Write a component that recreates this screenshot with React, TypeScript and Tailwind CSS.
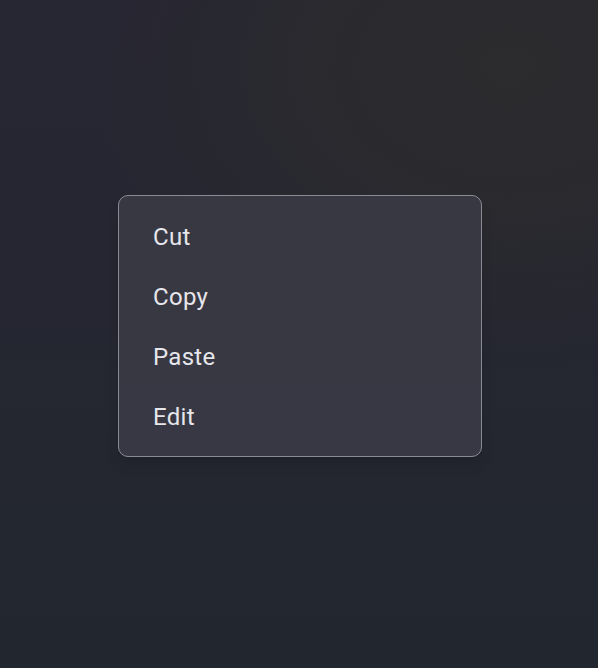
import React from "react";

const items = ["Cut", "Copy", "Paste", "Edit"];

export default function App() {
  return (
    <div className="relative w-[598px] h-[668px] overflow-hidden bg-[linear-gradient(180deg,#272633_0%,#252631_45%,#22272f_100%)] font-['Roboto','Liberation_Sans',sans-serif]">
      {/* faint greyish wash in the top right, like the blurred app behind */}
      <div className="absolute inset-0 bg-[radial-gradient(ellipse_70%_45%_at_85%_10%,#2c2c2f_0%,#2a2a2e_40%,transparent_100%)]" />
      <div className="relative pt-[195px] pl-[118px]">
        <div className="w-[364px] pt-[11px] pb-[9px] rounded-[10px] border border-[#8b8b95] bg-[#393944]/95 shadow-lg">
          {items.map((label) => (
            <div
              key={label}
              className="h-[60px] flex items-center pl-[34px] text-[24px] tracking-[0.3px] text-[#e6e6eb]"
            >
              {label}
            </div>
          ))}
        </div>
      </div>
    </div>
  );
}
